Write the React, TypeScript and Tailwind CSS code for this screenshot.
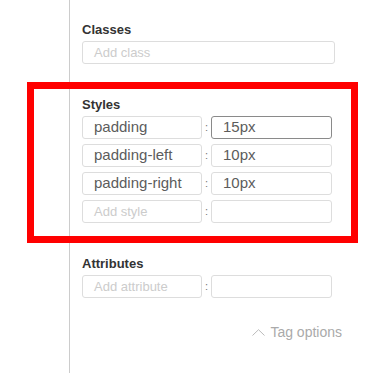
const STYLES = [
  { key: 'padding', value: '15px', active: true },
  { key: 'padding-left', value: '10px' },
  { key: 'padding-right', value: '10px' },
];

function Label({ children }: { children: string }) {
  return <div className="mb-[3px] text-[13px] leading-[16px] font-bold text-[#333]">{children}</div>;
}

function Field({ value, placeholder, active }: { value?: string; placeholder?: string; active?: boolean }) {
  return (
    <div
      className={`flex h-[23px] items-center rounded-[3px] border bg-white pl-[11px] ${
        active ? 'border-[#8a8a8a]' : 'border-[#ddd]'
      }`}
    >
      {value ? (
        <span className="text-[15px] text-[#5c5c5c]">{value}</span>
      ) : (
        <span className="text-[13px] text-[#ccc]">{placeholder}</span>
      )}
    </div>
  );
}

function Pair({ k, v, kPlaceholder, active }: { k?: string; v?: string; kPlaceholder?: string; active?: boolean }) {
  return (
    <div className="grid grid-cols-[120px_9px_121px] items-center">
      <Field value={k} placeholder={kPlaceholder} />
      <span className="text-center text-[11px] text-[#777]">:</span>
      <Field value={v} active={active} />
    </div>
  );
}

export default function App() {
  return (
    <div className="relative h-[373px] w-[369px] overflow-hidden bg-white font-['Liberation_Sans',Arial,sans-serif]">
      <div className="ml-[69px] h-full border-l border-[#ccc] pt-[22px] pr-[34px] pl-[12px]">
        {/* Classes */}
        <Label>Classes</Label>
        <Field placeholder="Add class" />

        {/* Styles */}
        <div className="mt-[33px]">
          <Label>Styles</Label>
          <div className="flex flex-col gap-[5px]">
            {STYLES.map((s) => (
              <Pair key={s.key} k={s.key} v={s.value} active={s.active} />
            ))}
            <Pair kPlaceholder="Add style" />
          </div>
        </div>

        {/* Attributes */}
        <div className="mt-[33px]">
          <Label>Attributes</Label>
          <Pair kPlaceholder="Add attribute" />
        </div>

        <div className="-mr-[7px] mt-[24px] flex items-center justify-end gap-[5px] text-[14px] text-[#aaa]">
          <svg width="13" height="7" viewBox="0 0 13 7" fill="none" stroke="#bbb" strokeWidth="1">
            <path d="M0.5 6.5 L6.5 0.7 L12.5 6.5" />
          </svg>
          <span>Tag options</span>
        </div>
      </div>

      {/* annotation */}
      <div className="pointer-events-none absolute top-[82px] left-[27px] h-[161px] w-[331px] border-[7px] border-[#ff0000]" />
    </div>
  );
}
